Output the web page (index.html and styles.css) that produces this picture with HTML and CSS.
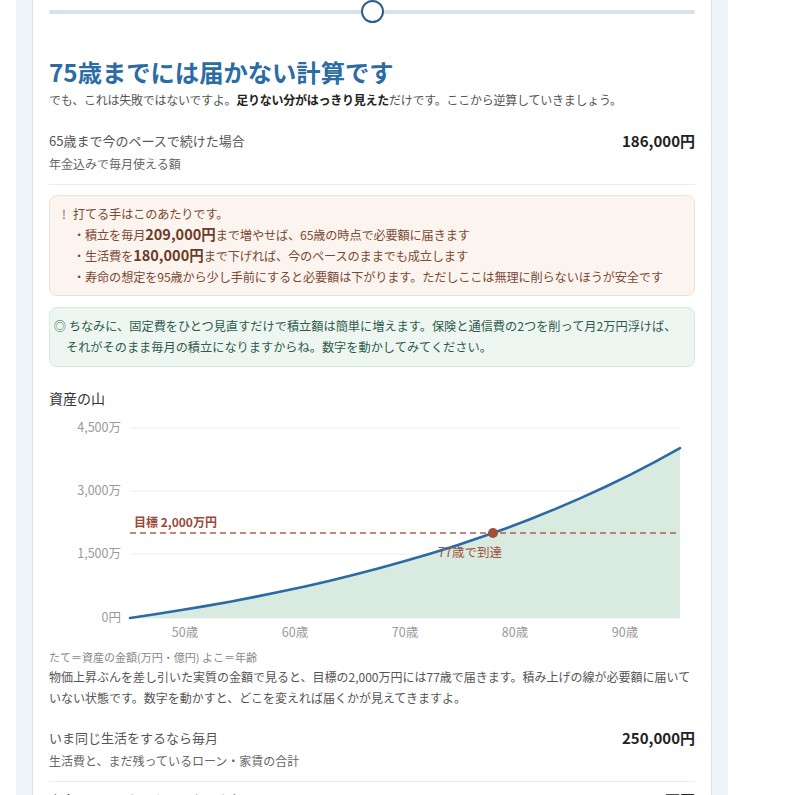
FILE: index.html
```html
<!DOCTYPE html>
<html lang="ja">
<head>
<meta charset="utf-8">
<title>資産シミュレーション</title>
<link rel="stylesheet" href="styles.css">
</head>
<body>
<div class="page">
  <div class="outer">
    <div class="card">
      <div class="slider">
        <div class="track"></div>
        <div class="thumb"></div>
      </div>

      <h1 class="title">75歳までには届かない計算です</h1>
      <p class="lead">でも、これは失敗ではないですよ。<strong>足りない分がはっきり見えた</strong>だけです。ここから逆算していきましょう。</p>

      <div class="row first">
        <div class="row-text">
          <div class="label">65歳まで今のペースで続けた場合</div>
          <div class="sub">年金込みで毎月使える額</div>
        </div>
        <div class="value">186,000円</div>
      </div>

      <div class="note warn">
        <span class="mark">!</span>
        <div class="note-body">
          <div>打てる手はこのあたりです。</div>
          <div>・積立を毎月<b>209,000円</b>まで増やせば、65歳の時点で必要額に届きます</div>
          <div>・生活費を<b>180,000円</b>まで下げれば、今のペースのままでも成立します</div>
          <div>・寿命の想定を95歳から少し手前にすると必要額は下がります。ただしここは無理に削らないほうが安全です</div>
        </div>
      </div>

      <div class="note tip">
        <p>◎ ちなみに、固定費をひとつ見直すだけで積立額は簡単に増えます。保険と通信費の2つを削って月2万円浮けば、それがそのまま毎月の積立になりますからね。数字を動かしてみてください。</p>
      </div>

      <h2 class="chart-title">資産の山</h2>
      <svg class="chart" width="646" height="230" viewBox="0 0 646 230">
        <g class="grid">
          <line x1="81" y1="12" x2="631" y2="12"/>
          <line x1="81" y1="75" x2="631" y2="75"/>
          <line x1="81" y1="138" x2="631" y2="138"/>
          <line x1="81" y1="202" x2="631" y2="202"/>
        </g>
        <g class="ylab">
          <text x="72" y="16">4,500万</text>
          <text x="72" y="79">3,000万</text>
          <text x="72" y="142">1,500万</text>
          <text x="72" y="206">0円</text>
        </g>
        <path class="area" d="M81,202 L106,198.3 L131,194.3 L156,190.1 L181,185.7 L206,180.9 L231,175.8 L256,170.4 L281,164.7 L306,158.6 L331,152.1 L356,145.1 L381,137.8 L406,129.9 L431,121.6 L456,112.7 L481,103.2 L506,93.1 L531,82.4 L556,71 L581,58.8 L606,45.8 L631,32.1 L631,202 Z"/>
        <line class="target" x1="81" y1="117" x2="631" y2="117"/>
        <text class="target-label" x="85" y="111">目標 2,000万円</text>
        <path class="curve" d="M81,202 L106,198.3 L131,194.3 L156,190.1 L181,185.7 L206,180.9 L231,175.8 L256,170.4 L281,164.7 L306,158.6 L331,152.1 L356,145.1 L381,137.8 L406,129.9 L431,121.6 L456,112.7 L481,103.2 L506,93.1 L531,82.4 L556,71 L581,58.8 L606,45.8 L631,32.1"/>
        <circle class="dot" cx="444" cy="117" r="5"/>
        <text class="reach" x="421" y="141">77歳で到達</text>
        <g class="xlab">
          <text x="136" y="221">50歳</text>
          <text x="246" y="221">60歳</text>
          <text x="356" y="221">70歳</text>
          <text x="466" y="221">80歳</text>
          <text x="576" y="221">90歳</text>
        </g>
      </svg>
      <p class="caption">たて＝資産の金額(万円・億円) よこ＝年齢</p>
      <p class="desc">物価上昇ぶんを差し引いた実質の金額で見ると、目標の2,000万円には77歳で届きます。積み上げの線が必要額に届いていない状態です。数字を動かすと、どこを変えれば届くかが見えてきますよ。</p>

      <div class="row second">
        <div class="row-text">
          <div class="label">いま同じ生活をするなら毎月</div>
          <div class="sub">生活費と、まだ残っているローン・家賃の合計</div>
        </div>
        <div class="value">250,000円</div>
      </div>

      <div class="row">
        <div class="row-text">
          <div class="label">寿命まで困らないために必要な額</div>
          <div class="sub">95歳までの生活費から年金を差し引いた額</div>
        </div>
        <div class="value">2,555万円</div>
      </div>
    </div>
  </div>
</div>
</body>
</html>
```

FILE: styles.css
```css
* { box-sizing: border-box; }

body {
  margin: 0;
  background: #ffffff;
  font-family: "Noto Sans CJK JP", "Noto Sans", sans-serif;
  color: #333;
}

.page {
  padding-left: 16px;
}

.outer {
  width: 712px;
  padding: 0 16px;
  background: #eff5fa;
}

.card {
  background: #ffffff;
  border-left: 1px solid #dbe5ee;
  border-right: 1px solid #dbe5ee;
  padding: 0 16px 400px;
}

/* slider */
.slider {
  position: relative;
  height: 23px;
  display: flex;
  align-items: center;
}

.track {
  flex: 1;
  height: 4px;
  border-radius: 2px;
  background: #d6e3ee;
}

.thumb {
  position: absolute;
  left: 50%;
  top: 0;
  width: 23px;
  height: 23px;
  margin-left: -11px;
  border-radius: 50%;
  background: #ffffff;
  border: 2px solid #2f5f88;
}

/* heading */
.title {
  margin: 33px 0 0;
  font-size: 24.3px;
  line-height: 32px;
  font-weight: 700;
  color: #2b6ca4;
}

.lead {
  margin: 2px 0 0;
  font-size: 12px;
  line-height: 20px;
  letter-spacing: -0.25px;
  color: #555;
}

.lead strong {
  color: #222;
  font-weight: 700;
}

/* rows */
.row {
  display: flex;
  justify-content: space-between;
  align-items: flex-start;
  padding: 8px 0 10px;
  border-bottom: 1px solid #e8ecef;
}

.row.first { margin-top: 13px; }
.row.second { margin-top: 12px; }

.label {
  font-size: 13px;
  line-height: 20px;
  color: #555;
}

.sub {
  margin-top: 3px;
  font-size: 12px;
  line-height: 20px;
  color: #666;
}

.value {
  font-size: 15px;
  line-height: 20px;
  font-weight: 700;
  color: #222;
}

/* notes */
.note {
  margin-top: 10px;
  border-radius: 8px;
  padding: 8px 12px;
  font-size: 12.2px;
  line-height: 21px;
}

.note p { margin: 0; }

.warn {
  display: flex;
  padding-bottom: 7px;
  background: #fcf4ef;
  border: 1px solid #efdfd4;
  color: #7b4934;
  letter-spacing: -0.15px;
}

.warn .mark {
  flex: none;
  width: 11px;
  color: #b0553a;
}

.warn b {
  font-size: 14.5px;
  line-height: 1;
  font-weight: 700;
  letter-spacing: 0;
  color: #6e3b26;
}

.tip {
  margin-top: 11px;
  padding: 8px 12px 8px 16px;
  background: #eef6f2;
  border: 1px solid #d6e7de;
  color: #2f5b4b;
}

.tip p { text-indent: -1em; }

/* chart */
.chart-title {
  margin: 21px 0 0;
  font-size: 14px;
  line-height: 20px;
  font-weight: 400;
  color: #333;
}

.chart {
  display: block;
  margin-top: 8px;
  font-family: "Noto Sans CJK JP", "Noto Sans", sans-serif;
}

.grid line {
  stroke: #eeeeee;
  stroke-width: 1;
}

.ylab text {
  font-size: 12.5px;
  fill: #9a9a9a;
  text-anchor: end;
}

.xlab text {
  font-size: 12.5px;
  fill: #9a9a9a;
  text-anchor: middle;
}

.area {
  fill: #d9ebe1;
  stroke: none;
}

.curve {
  fill: none;
  stroke: #2a6aa5;
  stroke-width: 2.6;
  stroke-linejoin: round;
  stroke-linecap: round;
}

.target {
  stroke: #b0604c;
  stroke-width: 1.4;
  stroke-dasharray: 6 4;
}

.target-label {
  font-size: 12px;
  font-weight: 700;
  fill: #9a4a3a;
}

.dot { fill: #a24e3a; }

.reach {
  font-size: 12.5px;
  fill: #a0503c;
  text-anchor: middle;
}

.caption {
  margin: 3px 0 0;
  font-size: 11px;
  line-height: 16px;
  color: #888;
}

.desc {
  margin: 1px 0 0;
  font-size: 12px;
  line-height: 21px;
  color: #555;
}
```
